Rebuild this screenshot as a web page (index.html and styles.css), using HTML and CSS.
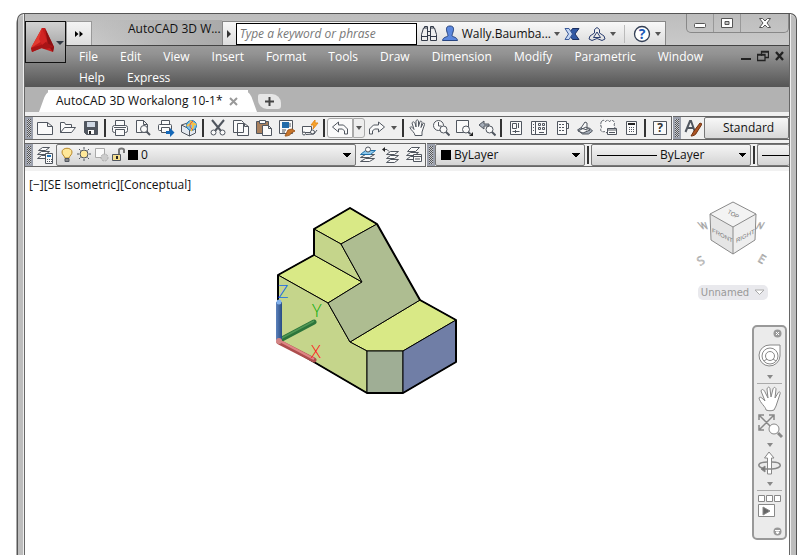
FILE: index.html
```html
<!DOCTYPE html>
<html lang="en">
<head>
<meta charset="utf-8">
<title>AutoCAD 3D Workalong</title>
<link rel="stylesheet" href="styles.css">
</head>
<body>
<div class="window">
<div class="client">
  <header class="titlebar">
    <button class="app" aria-label="Application menu">
      <svg width="39" height="39" viewBox="0 0 39 39"><path d="M16 5 5 25l1 4 9-4 3 1 9 3 1-5L19 5z" fill="#c41c1c"/><path d="M16 5 5 25l11-7z" fill="#e23a30"/><path d="m19 5 9 19-1 5-5-7z" fill="#8c1012"/><path d="m5 25 10-3 3-4 10 6-9 2-3-1-10 4z" fill="#a81416"/><path d="m13 16 3-11 5 13-5 4z" fill="#d12424"/><path d="M30 18h8l-4 4z" fill="#333a44"/></svg>
    </button>
    <button class="quick" aria-label="More tools"><svg width="10" height="8" viewBox="0 0 10 8"><path d="m1 1 3.500 3L1 7zM5.500 1 9 4 5.500 7z" fill="#000"/></svg></button>
    <h1 class="title">AutoCAD 3D W...</h1>
    <form class="info">
      <button class="expand" type="button" aria-label="Expand"><svg width="6" height="8" viewBox="0 0 6 8"><path d="m1 0 4 4-4 4z" fill="#333"/></svg></button>
      <input class="search" type="text" aria-label="Search" placeholder="Type a keyword or phrase">
      <button class="ib" type="button" aria-label="Find"><svg width="18" height="18" viewBox="0 0 18 18" fill="#eee" stroke="#333a48"><path d="M1.500 15.500v-6l2-6.500h4v12.500zM10.500 15.500V3h4l2 6.500v6zM7.500 6.500h3v4h-3zM1.500 11.500h6m3 0h6M4.500 3V1.500h3V3m3 0V1.500h3V3"/></svg></button>
      <button class="user" type="button"><svg width="18" height="18" viewBox="0 0 18 18"><path d="M9 1C5 1 5 4 6 7c.5 2 1 3 1 4-1 1-5 1-5.500 4.500h15C16 12 12 12 11 11c0-1 .5-2 1-4 1-3 1-6-3-6z" fill="#5b87dd" stroke="#27447f"/></svg><span>Wally.Baumba...</span><i class="dd"></i></button>
      <button class="ib x" type="button" aria-label="Exchange apps"><svg width="16" height="14" viewBox="0 0 16 14"><path d="M8.500 1.500H15L11 7l4 5.500H8.500l-2-3 2-2.500-2-2.500z" fill="#3159a5" stroke="#1b2f60"/><path d="M1 1.500h4L8.500 7 5 12.500H1L4.500 7z" fill="#c6d8f4" stroke="#3b5a99"/></svg></button>
      <button class="ib dropdown" type="button" aria-label="Autodesk 360"><svg width="18" height="16" viewBox="0 0 18 16" fill="none" stroke="#2b3e70"><path d="m9 1.500 2.500 2V7l4.500 3 1 3-3 1.500-5-2-5 2L1 13l1-3 4.500-3V3.500zM9 6l3.500 5.500h-7z"/></svg><i class="dd"></i></button>
      <span class="rule"></span>
      <button class="ib help" type="button" aria-label="Help"><svg width="18" height="18" viewBox="0 0 18 18"><circle cx="9" cy="9" r="7.500" fill="#fff" stroke="#333f55" stroke-width="1.300"/><text x="9" y="13.500" class="q">?</text></svg><i class="dd"></i></button>
    </form>
    <div class="controls">
      <button aria-label="Minimize"><svg width="14" height="12" viewBox="0 0 14 12"><rect x="1.500" y="6.500" width="11" height="4" rx="1" fill="#fff" stroke="#555"/></svg></button>
      <button aria-label="Maximize"><svg width="14" height="12" viewBox="0 0 14 12"><path fill="#fff" fill-rule="evenodd" stroke="#555" d="M1.500 1.500h11v9h-11zM5 4.500h4v3H5z"/></svg></button>
      <button class="close" aria-label="Close"><svg width="14" height="12" viewBox="0 0 14 12"><path d="M1.500 1.500h3L7 4l2.500-2.500h3L9 6l3.500 4.500h-3L7 8l-2.500 2.500h-3L5 6z" fill="#fff" stroke="#555"/></svg></button>
    </div>
  </header>
  <div class="menubar">
    <nav class="menus"><a href="#">File</a><a href="#">Edit</a><a href="#">View</a><a href="#">Insert</a><a href="#">Format</a><a href="#">Tools</a><a href="#">Draw</a><a href="#">Dimension</a><a href="#">Modify</a><a href="#">Parametric</a><a href="#">Window</a><a href="#">Help</a><a href="#">Express</a></nav>
    <div class="doc">
      <button aria-label="Minimize drawing"><svg width="12" height="12" viewBox="0 0 12 12"><path d="M1 9h10" stroke="#222" stroke-width="2"/></svg></button>
      <button aria-label="Restore drawing"><svg width="12" height="12" viewBox="0 0 12 12"><path d="M4.500 6V1.500h7v6H8M.5 4.500H8v6H.5zM4 2h8M.5 5H8" fill="none" stroke="#222" stroke-width="1.300"/></svg></button>
      <button aria-label="Close drawing"><svg width="12" height="12" viewBox="0 0 12 12"><path d="m2 2 7 8m0-8-7 8" stroke="#222" stroke-width="2.300"/></svg></button>
    </div>
  </div>
  <div class="tabs">
    <div class="tab"><span>AutoCAD 3D Workalong 10-1*</span><button aria-label="Close tab"><svg width="9" height="9" viewBox="0 0 9 9"><path d="m1 1 7 7m0-7L1 8" stroke="#999" stroke-width="2"/></svg></button></div>
    <button class="plus" aria-label="New tab"><svg width="9" height="9" viewBox="0 0 9 9"><path d="M4.500 0v9M0 4.500h9" stroke="#444" stroke-width="2"/></svg></button>
  </div>
  <div class="bars">
    <div class="row">
      <div class="bar">
        <span class="grip"></span>
        <button aria-label="New"><svg viewBox="0 0 18 18"><path d="M1.500 3.500h10l5 4v8h-15zM11.500 3.500v4h5"/></svg></button>
        <button aria-label="Open"><svg viewBox="0 0 18 18"><path d="M1.500 13.500v-10h4l1 2h6v3M1.500 13.500l4-5h11l-4 5z"/></svg></button>
        <button aria-label="Save"><svg viewBox="0 0 18 18"><path class="dark" d="M2.500 2.500h13v13h-11l-2-2z"/><path fill="#cfd8e4" stroke="none" d="M5 3h8v5H5z"/><path stroke="none" d="M6 11h6v4H6z"/><path class="ink" d="M7 12h2v3H7z"/></svg></button>
        <span class="sep"></span>
        <button aria-label="Plot"><svg viewBox="0 0 18 18"><path d="M4.500 6.500v-5h9v5"/><rect x="1.500" y="6.500" width="15" height="7" rx="2"/><path d="M4.500 10.500h9v6h-9zM3 8.500h12"/></svg></button>
        <button aria-label="Plot preview"><svg viewBox="0 0 18 18"><path d="M2.500 13.500v-12h7l4 4v8zM9.500 1.500v4h4"/><circle cx="10" cy="10" r="3.500"/><path stroke-width="2" d="m13 13 3 3"/></svg></button>
        <button aria-label="Publish"><svg viewBox="0 0 18 18"><path d="M4.500 5.500v-4h8v4"/><rect x="1.500" y="5.500" width="13" height="6" rx="1"/><path d="M4.500 8.500h8v5h-8z"/><path d="M9 12h4V9l4.500 4.500L13 18v-3H9z" fill="#1468b8" stroke="none"/></svg></button>
        <button aria-label="3D print"><svg viewBox="0 0 18 18"><path d="m1.500 6 6-2 8 3v7l-6 3-8-4z" fill="#e4e9f0"/><path d="m1.500 6 8 4v7" fill="none"/><circle cx="11.500" cy="6.500" r="5" fill="#7cc0e8" stroke="#247bb5"/><path d="M10 2c4 2 4 6 1 10M7 7c3-3 7-3 9-1" fill="none" stroke="#f6c245" stroke-width="2"/><path d="M13 2c-4 3-4 6 0 9" fill="none" stroke="#e0503b"/></svg></button>
        <span class="sep"></span>
        <button aria-label="Cut"><svg viewBox="0 0 18 18"><path d="m3 1 9 11M15 1 6 12" stroke-width="2"/><circle cx="4.500" cy="13.500" r="2.500"/><circle cx="13.500" cy="13.500" r="2.500"/></svg></button>
        <button aria-label="Copy"><svg viewBox="0 0 18 18"><path d="M1.500 13.500v-12h8l2 2v10zM5.500 4.500h7l4 3v9h-11zM12.500 4.500v3h4"/></svg></button>
        <button aria-label="Paste"><svg viewBox="0 0 18 18"><path fill="#a9805d" d="M1.500 2.500h12v12h-12z"/><path d="M4.500 1.500h6v3h-6zM7.500 6.500h6l3 3v7h-9zM13.500 6.500v3h3"/></svg></button>
        <button aria-label="Match properties"><svg viewBox="0 0 18 18"><path d="M1.500 1.500h13v13h-13z"/><path d="M4 3h7v6H4z" fill="#236caa" stroke="none"/><path d="M4 11h4M4 13h3M12 4v4"/><path d="m10 11 4-1 3 2-4 2c0 2-3 3-6 3 1-2 2-4 3-6z" fill="#c87529" stroke="#a05a20"/></svg></button>
        <button aria-label="Block editor"><svg viewBox="0 0 18 18"><path d="M1.500 7.500h9v6h-9z"/><path d="m14 1-4 5h3l-1 4 5-6h-3z" fill="#f8a52b" stroke="#e58a1b"/><circle cx="3" cy="14.500" r="1.500"/><circle cx="11.500" cy="13" r="2"/><path fill="none" d="m5 15.500 8-.5 3-4"/></svg></button>
        <span class="sep"></span>
        <button class="undo" aria-label="Undo"><svg viewBox="0 0 18 18"><path d="m1.500 8 6-5v3h5l4 4v5h-3v-3l-2-2h-4v3z"/></svg></button>
        <button class="more boxed" aria-label="Undo list"><i class="dd"></i></button>
        <button aria-label="Redo"><svg viewBox="0 0 18 18"><path d="m16.500 8-6-5v3h-5l-4 4v5h3v-3l2-2h4v3z"/></svg></button>
        <button class="more" aria-label="Redo list"><i class="dd"></i></button>
        <span class="sep"></span>
        <button aria-label="Pan"><svg viewBox="0 0 18 18"><path d="M6 16.500c0-3-4-5-5-8 1-1.500 2-.5 4 2L3 4c1-2 2-1 3 0l1 4V2c1-2 2-1 2.500 0v5.500L11 2.500c1-1 2 0 2 1l-1 5 2-4c1-1 2 0 1.500 1L13 13v3.500z"/></svg></button>
        <button aria-label="Zoom realtime"><svg viewBox="0 0 18 18"><circle cx="6.500" cy="6.500" r="5"/><path fill="none" d="M6.500 3v4h3"/><circle cx="11.500" cy="10.500" r="3.500"/><path stroke-width="2" d="m14 13 3.500 3.500"/></svg></button>
        <button aria-label="Zoom window"><svg viewBox="0 0 18 18"><path d="M1.500 1.500h12v12h-12z"/><circle cx="11" cy="10.500" r="3.500"/><path stroke-width="2" d="m13 13 2.500 2"/><path class="ink" d="M18 13v4h-4z"/></svg></button>
        <button aria-label="Zoom previous"><svg viewBox="0 0 18 18"><path d="m1 6 5-4v3h5v2H6v3z" fill="#a5adb8"/><circle cx="11.500" cy="10.500" r="3.500"/><path stroke-width="2" d="m14 13 3.500 3.500"/></svg></button>
        <span class="sep"></span>
        <button aria-label="Properties"><svg viewBox="0 0 18 18"><path d="M3.500 2.500h11v13h-11zM5.500 4.500h4v5h-4zM11.500 4v5M5.500 12.500h7M8.500 11v3"/></svg></button>
        <button aria-label="DesignCenter"><svg viewBox="0 0 18 18"><path d="M1.500 2.500h15v13h-15z"/><path d="M5.500 3v12M8.500 4.500h2v2h-2zm4 0h2v2h-2zm-4 4h2v2h-2zm4 0h2v2h-2zM9 13.500h5M3 5.500h1m-1 3h1m-1 3h1"/></svg></button>
        <button aria-label="Tool palettes"><svg viewBox="0 0 18 18"><path d="M4.500 2.500h9v13h-9zM13.500 4.500h2v5h-2"/><path stroke-dasharray="2 1" d="M6 5.500h6M6 8.500h6M6 11.500h6"/></svg></button>
        <button aria-label="Sheet set"><svg viewBox="0 0 18 18"><path fill="#a5adb8" d="m1.500 11 3-2h9l3 3-4 3h-6z"/><path d="m5 9 4-6 2 1v7zM2 12l8-4 4 3-7 3z"/></svg></button>
        <button aria-label="Markup"><svg viewBox="0 0 18 18"><path stroke-dasharray="3 1" d="M2.500 2.500c2-2 3-1 4 0 2-2 3-1 4 0 2-2 5-1 5 2-1 2 1 3 0 5-2 2-4 1-5 3-2 2-5 1-5 0-3 1-5-1-3-4-1-2-1-4 0-6z"/><path d="M8.500 9.500h9v6h-9zM8 11h9M10 13.500h6"/></svg></button>
        <button aria-label="Calculator"><svg viewBox="0 0 18 18"><path d="M4.500 2.500h10v13h-10z"/><path class="ink" d="M6 4h7v2H6z"/><path stroke-dasharray="1 1" d="M7 8.500h6m-6 2h6m-6 2h6"/></svg></button>
        <span class="sep"></span>
        <button aria-label="Help topics"><svg viewBox="0 0 18 18"><path d="M2.500 2.500h13v13h-13z"/><text class="q small" x="9" y="13">?</text></svg></button>
      </div>
      <div class="bar grow">
        <span class="grip"></span>
        <button aria-label="Text style"><svg viewBox="0 0 18 18"><path fill="none" stroke-width="2" d="M1.500 13 6 2h1l4 11M3 9h7"/><path d="m10 12 6-8 2 1-5 8c-1 3-4 4-6 4z" fill="#ac5424" stroke="#70310f"/></svg></button>
        <select class="combo plain" aria-label="Text style name"><option>Standard</option></select>
      </div>
    </div>
    <div class="row">
      <div class="bar">
        <span class="grip"></span>
        <button aria-label="Layer properties"><svg viewBox="0 0 18 18"><path d="m1.500 12.500 4-3h8l-4 3zm0-4 4-3h8l-4 3zm1-4 4-3h7l-4 3z"/><path d="M9.500 7.500h7v10h-7z"/><path fill="#2475b5" stroke="none" d="M11 9h4v2h-4z"/><path stroke-dasharray="1 1" d="M11 13.500h5m-5 2h5"/></svg></button>
        <div class="combo layer">
          <svg viewBox="0 0 16 16"><path d="M5 11C4 8 2 8 2 5c0-5 10-5 10 0 0 3-2 3-3 6z" fill="#ffe899" stroke="#b8892c"/><path d="M5 11.500h4v3H5z" fill="#888"/></svg>
          <svg viewBox="0 0 16 16"><circle cx="7" cy="7" r="4" fill="#ffe899"/><path d="M7 0v2m0 10v2M0 7h2m10 0h2M2 2l1.500 1.500m7 7L12 12M2 12l1.500-1.500m7-7L12 2"/></svg>
          <svg viewBox="0 0 16 16"><path stroke="#aaa" d="M1.500 1.500h9v9h-9z"/><circle cx="10.500" cy="10.500" r="3.500" fill="#ccc" stroke="#aaa" stroke-dasharray="2 1"/></svg>
          <svg viewBox="0 0 16 16"><path d="M1.500 7.500h8v6h-8z" fill="#f3dc8b"/><path fill="none" stroke="#777" stroke-width="2" d="M8 7V3c0-2 5-2 5 0v3"/><path class="ink" d="M5 9h2v3H5z"/></svg>
          <i class="swatch"></i>
          <select aria-label="Layer"><option>0</option></select>
        </div>
        <button aria-label="Make current"><svg viewBox="0 0 18 18"><path d="m1.500 15.500 5-3h9l-5 3zm0-4 5-3h9l-5 3z"/><path fill="#8cc8ec" stroke="#1d6fa8" d="m1.500 8.500 5-4h10l-5 4z"/><circle cx="9" cy="3.500" r="2.500"/></svg></button>
        <button aria-label="Layer previous"><svg viewBox="0 0 18 18"><path d="m4.500 16.500 4-3h8l-4 3zm0-4 4-3h8l-4 3zm0-4 4-3h8l-4 3z"/><path fill="none" d="M1 3.500h4l2 2"/><path class="ink" d="M0 3.500 3 1v5z"/></svg></button>
        <button aria-label="Layer states"><svg viewBox="0 0 18 18"><path d="m1.500 13.500 4-3h8l-4 3zm0-4 4-3h8l-4 3zm1-4 4-4h8l-4 4z"/><path d="M8.500 8.500h8v7h-8zM8 10.500h8M10 13h5"/></svg></button>
      </div>
      <div class="bar grow props">
        <span class="grip"></span>
        <div class="combo color"><i class="swatch"></i><select aria-label="Color"><option>ByLayer</option></select></div>
        <span class="sep"></span>
        <div class="combo line"><i class="dash"></i><select aria-label="Linetype"><option>ByLayer</option></select></div>
        <span class="sep"></span>
        <div class="combo weight"><i class="dash"></i></div>
      </div>
    </div>
  </div>
  <main class="canvas">
    <p class="view">[−][SE Isometric][Conceptual]</p>
    <svg class="model" width="195" height="200" viewBox="270 200 195 200" role="img" aria-label="3D model">
      <defs><linearGradient id="zb"><stop stop-color="#5d83bd"/><stop offset="1" stop-color="#284b83"/></linearGradient></defs>
      <g stroke="#000" stroke-width="1" stroke-linejoin="round">
        <path fill="#d9e986" d="m350 207 27 16-36 20-27-15zM314 254l48 27-34 21-50-28zM350 341l70-42 36 20-53 31h-36z"/>
        <path fill="#c5d58b" d="m314 228 27 15 21 38-48-27zM278 274l50 28 22 39 17 9v42l-89-52z"/>
        <path fill="#aebd91" d="m377 223 43 76-70 42-22-39 34-21-21-38z"/>
        <path fill="#9fae95" d="M367 350h36v42h-36z"/>
        <path fill="#707ea6" d="m403 350 53-31v42l-53 31z"/>
        <path fill="none" stroke-width="2" d="m350 207 27 16 43 76 36 20v42l-53 31h-36l-89-52v-66l36-20v-26z"/>
      </g>
      <path d="m280 339 34-18" stroke="#2b743a" stroke-width="5" stroke-linecap="round"/><path d="m280 338 34-18" stroke="#4f9755" stroke-width="1.500"/>
      <path d="m279 341 35 18" stroke="#ad4d4d" stroke-width="5" stroke-linecap="round"/><path d="m280 340 34 18" stroke="#df8585" stroke-width="2"/>
      <path fill="url(#zb)" d="M276 301h6v38h-6z"/><circle cx="279" cy="301" r="2.500" fill="#83b2ed"/><circle cx="279" cy="340" r="3" fill="#d38585"/>
      <text class="axis z" x="278" y="297">Z</text><text class="axis y" x="312" y="316">Y</text><text class="axis xx" x="311" y="357">X</text>
    </svg>
    <div class="cube">
      <svg width="88" height="70" viewBox="689 198 88 70" role="img" aria-label="View cube">
        <g class="compass"><text transform="translate(701 228) skewX(30)">W</text><text transform="translate(755 228) skewX(-30)">N</text><text class="big" transform="translate(700 265) rotate(-30)">S</text><text class="big" transform="translate(757 260) rotate(30)">E</text></g>
        <path d="m733 201 23 12-23 13-23-13z" fill="#f3f3f3"/><path d="m710 213 23 13v27l-22-14z" fill="#e5e5e5"/><path d="m733 226 23-13-1 26-22 14z" fill="#eee"/>
        <path d="m733 201 23 12-1 26-22 14-22-14-1-26zm-23 12 23 13 23-13m-23 13v27" fill="none" stroke="#8a8a8a"/>
        <g class="faces"><text transform="translate(727 212) rotate(30)">TOP</text><text transform="translate(712 231) skewY(28)">FRONT</text><text transform="translate(736 242) skewY(-28)">RIGHT</text></g>
      </svg>
      <button class="ucs">Unnamed <svg width="11" height="7" viewBox="0 0 11 7"><path d="M1 1h9L5.500 5.500z" fill="#fff" stroke="#aaa"/></svg></button>
    </div>
    <aside class="nav">
      <button class="mini" aria-label="Close navigation bar"><svg width="9" height="9" viewBox="0 0 9 9"><circle cx="4.500" cy="4.500" r="4" fill="#999"/><path d="m3 3 3 3m0-3L3 6" stroke="#fff"/></svg></button>
      <button class="wheel" aria-label="Steering wheel"><svg width="24" height="30" viewBox="0 0 24 30"><path d="M12 4h10v11a10.500 10.500 0 1 1-10-11z"/><circle cx="12" cy="15" r="8"/><circle cx="12" cy="15" r="4.500"/><path d="m6 20 3-2m6 0 3 2"/></svg></button>
      <i class="dd"></i><hr>
      <button aria-label="Pan view"><svg width="24" height="28" viewBox="0 0 24 28"><path d="M8 25c0-3-6-7-7-12 1-2 3 0 6 3L3 6c1-3 3-1 4 1l3 6L9 4c1-3 3-2 3 0l1 8 2-8c1-3 3-1 3 0l-1 9 3-5c1-2 3-1 2 1l-4 12-2 4c-3 1-5 1-8 0z"/></svg></button>
      <button aria-label="Zoom extents"><svg width="26" height="26" viewBox="0 0 26 26"><path d="m2 2 15 15M2 17 17 2M2 7V2h5m5 0h5v5M2 12v5h5" stroke-width="1.500" fill="none"/><circle cx="17" cy="16" r="5"/><path stroke-width="3" d="m21 20 4 4"/></svg></button>
      <i class="dd"></i>
      <button aria-label="Orbit"><svg width="26" height="28" viewBox="0 0 26 28"><path d="M10.500 24V8h-3L12 2l5 6h-2.500v16z"/><path fill="none" stroke-width="1.500" d="M15 19c12-1 10-7 0-7m-5 0c-10 0-11 5-2 7h7"/><path d="m8 16-4 3 4 3z" fill="#777"/></svg></button>
      <i class="dd"></i><hr>
      <button aria-label="ShowMotion"><svg width="26" height="26" viewBox="0 0 26 26"><path d="M1.500 3.500h6v6h-6zM9.500 3.500h6v6h-6zM17.500 3.500h6v6h-6zM1.500 12.500h16v12h-16z"/><path fill="#666" d="m6 15 7 4-7 4z"/></svg></button>
      <button class="mini foot" aria-label="Navigation bar options"><svg width="9" height="9" viewBox="0 0 9 9"><circle cx="4.500" cy="4.500" r="4" fill="#999"/><path d="M2 3.500h5M3 5h3L4.500 7z" fill="#fff" stroke="#fff"/></svg></button>
    </aside>
  </main>
</div>
</div>
</body>
</html>
```
FILE: styles.css
```css
* { box-sizing: border-box; }
body { margin: 0; background: #fff; font: 12px/16px "Open Sans", "Noto Sans", sans-serif; color: #111; }
button { border: 0; padding: 0; margin: 0; background: none; font: inherit; color: inherit; display: flex; align-items: center; justify-content: center; }
svg { display: block; flex: none; }
.window { margin: 13px 14px 0 17px; min-height: calc(100vh - 13px); padding: 0 6px; display: flex; border: 1px solid #555; border-bottom: 0; border-radius: 7px 7px 0 0; background: #bdbdbd; box-shadow: -2px 3px 0 -1px #aaa, inset 0 1px 0 #ddd; }
.client { flex: 1; min-width: 0; display: flex; flex-direction: column; position: relative; border: 1px solid #666; border-width: 0 1px; box-shadow: -1px 0 #eee, 1px 0 #eee; }
.titlebar { height: 31px; display: flex; align-items: flex-end; background: linear-gradient(#bdbdbd, #c9c9c9); }
.app { position: absolute; z-index: 2; left: 0; top: 7px; width: 41px; height: 42px; border: 1px solid #111; background: linear-gradient(#d2d2d2, #8c8c8c); }
.quick { width: 26px; height: 24px; margin-left: 41px; border: 1px solid #999; border-bottom: 0; background: linear-gradient(#f4f4f4, #dedede); }
.title { flex: 1; height: 25px; margin: 0; font-size: 12px; font-weight: 400; line-height: 17px; text-align: right; padding-right: 1px; white-space: nowrap; background: linear-gradient(90deg, transparent, #b3b3b3 60%, #aaa); }
.info { display: flex; align-items: center; height: 24px; border: 1px solid #888; border-bottom: 0; background: linear-gradient(#f8f8f8, #dcdcdc); }
.expand { width: 13px; height: 22px; }
.search { width: 181px; height: 22px; border: 1px solid #000; padding: 0 3px; background: #fff; font: italic 12px/16px "Open Sans", sans-serif; }
.search::placeholder { color: #777; opacity: 1; }
.ib { width: 24px; gap: 4px; }
.dropdown, .ib.help { width: 36px; }
.rule { width: 1px; height: 18px; background: #bbb; margin: 0 4px; }
.user { gap: 3px; white-space: nowrap; }
.dd { border: 3px solid transparent; border-top: 4px solid #555; border-bottom: 0; flex: none; }
.q { font: bold 14px "Open Sans", sans-serif; fill: #1e59b8; stroke: none; text-anchor: middle; }
.q.small { font-size: 12px; fill: #333; }
.controls { display: flex; align-self: flex-start; height: 19px; margin-left: 20px; border: 1px solid #888; border-top: 0; border-radius: 0 0 5px 5px; }
.controls button { width: 27px; border-right: 1px solid #999; }
.controls button.close { width: 47px; border: 0; }
.menubar { display: flex; align-items: flex-start; padding-left: 54px; background: linear-gradient(#9b9b9b, #929292 20%, #555); border-top: 1px solid #444; height: 42px; }
.menus { flex: 1; display: flex; flex-wrap: wrap; column-gap: 22px; }
.menus a { color: #fff; text-decoration: none; line-height: 21px; }
.doc { display: flex; gap: 5px; padding: 4px 3px 0 24px; }
.tabs { height: 25px; display: flex; align-items: flex-end; padding-left: 23px; background: #b2b2b2; }
.tab { position: relative; z-index: 0; height: 22px; display: flex; align-items: center; gap: 6px; padding: 0 10px 0 8px; background: #fff; white-space: nowrap; }
.tab::before, .tab::after { content: ""; position: absolute; z-index: -1; top: 0; bottom: 0; width: 14px; background: #fff; }
.tab::before { left: -5px; transform: skewX(-20deg); border-radius: 7px 0 0; }
.tab::after { right: -5px; transform: skewX(20deg); border-radius: 0 7px 0 0; }
.plus { width: 23px; height: 15px; margin: 0 0 3px 10px; background: #e6e6e6; border-radius: 2px 9px 3px 9px; }
.bars { padding: 4px 0; display: flex; flex-direction: column; gap: 3px; background: #f1f1f1; overflow: hidden; }
.row { display: flex; gap: 1px; height: 24px; }
.bar { display: flex; align-items: center; height: 24px; flex: none; border: 1px solid #666; border-left: 0; background: #f0f0f0; }
.bar.grow { flex: 1; min-width: 0; border-right: 0; }
.grip { width: 8px; height: 22px; flex: none; border: 2px solid #9ba0ac; background: repeating-conic-gradient(#555 0 25%, #c8cbd2 0 50%) 0 0/2px 2px; }
.bar button { width: 23px; height: 20px; flex: none; }
.bar svg { width: 18px; height: 18px; fill: #fafafa; stroke: #50565f; }
.bar .dark { fill: #50565f; }
.bar .ink { fill: #222; stroke: none; }
.sep { width: 2px; height: 18px; margin: 0 2px; background: #333; flex: none; }
.bar button.undo { width: 26px; border: 1px solid #aaa; border-radius: 3px 0 0 3px; background: #fafafa; }
.bar button.more { width: 12px; }
.bar button.boxed { border: 1px solid #aaa; border-radius: 0 3px 3px 0; background: #eee; }
.combo { display: flex; align-items: center; height: 22px; border: 1px solid #777; border-radius: 2px; background: linear-gradient(#f5f5f5, #d4d4d4); min-width: 0; }
select { flex: 1; min-width: 0; height: 20px; border: 0; padding: 0 3px; appearance: none; color: #111; font: 12px/18px "Open Sans", sans-serif; }
.combo select { background: conic-gradient(from -45deg at 50% 100%, #000 90deg, transparent 0) no-repeat right 4px center/8px 4px; }
.plain { flex: 1; padding-left: 18px; border: 1px solid #777; background: linear-gradient(#f8f8f8, #d8d8d8); }
.layer { width: 300px; padding-left: 3px; }
.layer svg { width: 16px; height: 16px; margin-right: 1px; }
.swatch { width: 10px; height: 10px; background: #000; flex: none; }
.color { width: 150px; flex: none; padding-left: 5px; }
.line { width: 160px; flex: none; padding-left: 5px; }
.dash { width: 60px; height: 1px; background: #000; flex: none; }
.weight { flex: 1; padding-left: 4px; border-right: 0; overflow: hidden; }
.canvas { flex: 1; position: relative; background: #fff; min-height: 384px; overflow: hidden; }
.view { margin: 6px 4px; }
.model { position: absolute; left: 245px; top: 30px; }
.axis { font: 300 18px "Open Sans", sans-serif; }
.z { fill: #1469e8; }
.y { fill: #0bad0b; }
.xx { fill: #ff2020; }
.cube { position: absolute; right: 12px; top: 28px; display: flex; flex-direction: column; align-items: center; gap: 16px; }
.compass text { font: 9px "Open Sans", sans-serif; fill: #eee; stroke: #999; stroke-width: 0.5; }
.compass .big { font-size: 12px; }
.faces text { font: 6px "Liberation Sans", sans-serif; fill: #777; }
.ucs { gap: 5px; padding: 0 3px; font: 10px/15px "DejaVu Sans", sans-serif; color: #999; background: #e9e9ed; border-radius: 5px; }
.nav { position: absolute; right: 2px; top: 154px; width: 35px; padding: 2px 3px; display: flex; flex-direction: column; align-items: center; border: 2px solid #999; border-radius: 5px; background: #ebebeb; }
.nav svg { fill: #fff; stroke: #888; }
.nav .dd { margin: 4px 0 3px; border-top-color: #888; }
.nav hr { width: 100%; margin: 1px 0; border: 0; border-top: 1px solid #aaa; }
.wheel { margin-top: 3px; }
.mini { align-self: flex-end; }
.mini svg { stroke: none; }
.foot { margin-top: 9px; }
```
